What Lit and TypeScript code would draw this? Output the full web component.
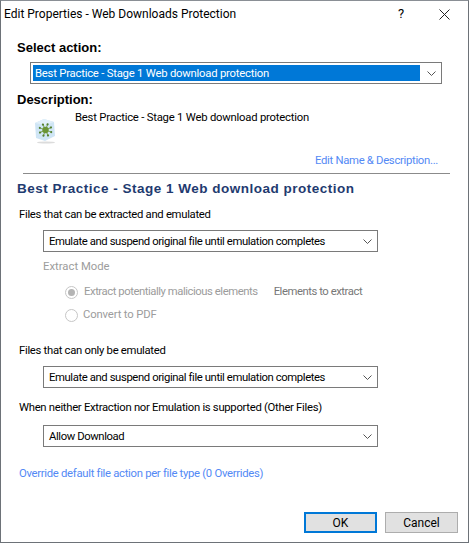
import { html, css, LitElement, svg } from "lit";
import { customElement } from "lit/decorators.js";

const chevron = html`<svg class="chev" width="9" height="5" viewBox="0 0 9 5"><path d="M.5.5l4 4 4-4" fill="none" stroke="#555" stroke-width="1"/></svg>`;

// little virus-in-a-cube icon next to the description
const spikes = [20, 65, 110, 155, 200, 245, 290, 335].map(
  (a) => svg`<g transform="rotate(${a} 12.5 14)"><path d="M12.5 14V8.5" stroke="#7fa655" stroke-width="1"/><circle cx="12.5" cy="8" r="1.1" fill="#55802f"/></g>`
);

@customElement("app-root")
export class AppRoot extends LitElement {
  static styles = css`
    :host {
      display: block;
      width: 469px;
      height: 543px;
      box-sizing: border-box;
      background: #fff;
      border: 1px solid #6d7278;
      border-top-color: #8a8f95;
      font-family: Roboto, "Noto Sans", sans-serif;
      font-size: 11.3px;
      line-height: 16px;
      letter-spacing: -0.3px;
      color: #000;
      overflow: hidden;
    }
    .titlebar {
      display: flex;
      align-items: center;
      height: 26px;
      padding-left: 3px;
      font-size: 12px;
      letter-spacing: 0;
    }
    .titlebar .name { flex: 1; }
    .help {
      width: 12px;
      text-align: center;
      font-size: 13px;
      margin-right: 32px;
    }
    .close { display: block; margin-right: 18px; }
    .main { display: flex; flex-direction: column; padding-left: 16px; }
    .strong {
      font-family: "Liberation Sans", sans-serif;
      font-weight: 700;
      font-size: 13px;
      line-height: 16px;
      letter-spacing: 0;
    }
    .select-action { margin-top: 13px; }
    .combo {
      display: flex;
      align-items: center;
      box-sizing: border-box;
      height: 22px;
      border: 1px solid #7a7a7a;
      padding-right: 3px;
    }
    .combo .value {
      flex: 1;
      padding: 1px 0 0 5px;
      white-space: nowrap;
      letter-spacing: -0.4px;
    }
    .chev { flex: none; margin: 0 2px 0 4px; }
    .top-combo { width: 412px; margin: 6px 0 0 13px; padding: 2px; }
    .top-combo .value {
      background: #0078d7;
      color: #fff;
      box-sizing: border-box;
      height: 16px;
      padding: 1px 0 0 2px;
      line-height: 15px;
      letter-spacing: -0.22px;
    }
    .top-combo .chev { margin: 0 3px 0 7px; }
    .description-label { margin-top: 8px; }
    .desc-row { display: flex; align-items: flex-start; height: 45px; }
    .desc-row svg { margin: 8px 0 0 16px; flex: none; }
    .desc-row .text { margin-left: 18px; margin-top: 2px; letter-spacing: -0.22px; }
    .link { color: #5389f5; }
    .edit-link { text-align: right; margin-right: 30px; }
    .rule {
      height: 1px;
      background: #8b8b8b;
      margin: 4px 18px 0 6px;
    }
    .heading {
      font-family: "Liberation Sans", sans-serif;
      font-weight: 700;
      font-size: 13.5px;
      letter-spacing: 0.5px;
      color: #1f3b70;
      margin-top: 7px;
      line-height: 16px;
    }
    .section { padding-left: 2px; }
    .label { line-height: 16px; }
    .form-combo { width: 335px; margin-left: 24px; }
    .first { margin-top: 10px; }
    .gap-s { margin-top: 7px; }
    .disabled { color: #9c9c9c; }
    .extract-mode { margin: 7px 0 0 24px; letter-spacing: 0; }
    .radio-row {
      display: flex;
      align-items: center;
      height: 16px;
      margin-left: 46px;
      letter-spacing: -0.45px;
    }
    .radio-row.next { margin-top: 7px; letter-spacing: -0.15px; }
    .radio-row.top { margin-top: 9px; }
    .radio {
      flex: none;
      box-sizing: border-box;
      width: 13px;
      height: 13px;
      border-radius: 50%;
      border: 1px solid #c6c6c6;
      margin-right: 6px;
      display: flex;
      align-items: center;
      justify-content: center;
    }
    .radio-row.next .radio { margin-right: 5px; }
    .radio.on::after {
      content: "";
      width: 7px;
      height: 7px;
      border-radius: 50%;
      background: #b4b4b4;
    }
    .extra { margin-left: 16px; color: #777; }
    .only { margin-top: 20px; }
    .neither { margin-top: 12px; }
    .last-combo { margin-top: 9px; }
    .override { margin-top: 19px; }
    .footer {
      display: flex;
      justify-content: flex-end;
      gap: 8px;
      margin: 30px 10px 0 0;
    }
    .btn {
      box-sizing: border-box;
      width: 73px;
      height: 21px;
      background: #e1e1e1;
      border: 1px solid #adadad;
      display: flex;
      align-items: center;
      justify-content: center;
      font-size: 12px;
      letter-spacing: 0;
    }
    .btn.primary { border: 2px solid #0078d7; }
  `;

  private formCombo(value: string) {
    return html`<div class="combo form-combo"><span class="value">${value}</span>${chevron}</div>`;
  }

  render() {
    const emulate = "Emulate and suspend original file until emulation completes";
    const name = "Best Practice - Stage 1 Web download protection";
    return html`
      <div class="titlebar">
        <span class="name">Edit Properties - Web Downloads Protection</span>
        <span class="help">?</span>
        <svg class="close" width="11" height="11" viewBox="0 0 11 11"><path d="M.5.5l10 10M10.5.5l-10 10" stroke="#222" fill="none"/></svg>
      </div>
      <div class="main">
        <div class="strong select-action">Select action:</div>
        <div class="combo top-combo"><span class="value">${name}</span>${chevron}</div>
        <div class="strong description-label">Description:</div>
        <div class="desc-row">
          <svg width="24" height="28" viewBox="0 0 24 28">
            <path d="M11 3l10 3 1 14-10 5-9-3-1-15z" fill="#cfe5f5"/>
            <path d="M11 3l10 3-9 3-10-2z" fill="#e2f0fa"/>
            <ellipse cx="13" cy="26.5" rx="9" ry="1" fill="#dcdcdc"/>
            ${spikes}
            <circle cx="12.5" cy="14" r="3.2" fill="#6a9434"/>
          </svg>
          <span class="text">${name}</span>
        </div>
        <div class="link edit-link">Edit Name &amp; Description...</div>
        <div class="rule"></div>
        <div class="heading">${name}</div>
        <div class="section">
          <div class="label first">Files that can be extracted and emulated</div>
          <div class="gap-s">${this.formCombo(emulate)}</div>
          <div class="label disabled extract-mode">Extract Mode</div>
          <div class="radio-row disabled top">
            <span class="radio on"></span><span>Extract potentially malicious elements</span>
            <span class="extra">Elements to extract</span>
          </div>
          <div class="radio-row disabled next">
            <span class="radio"></span><span>Convert to PDF</span>
          </div>
          <div class="label only">Files that can only be emulated</div>
          <div class="gap-s">${this.formCombo(emulate)}</div>
          <div class="label neither">When neither Extraction nor Emulation is supported (Other Files)</div>
          <div class="last-combo">${this.formCombo("Allow Download")}</div>
          <div class="link override">Override default file action per file type (0 Overrides)</div>
        </div>
        <div class="footer">
          <div class="btn primary">OK</div>
          <div class="btn">Cancel</div>
        </div>
      </div>
    `;
  }
}
